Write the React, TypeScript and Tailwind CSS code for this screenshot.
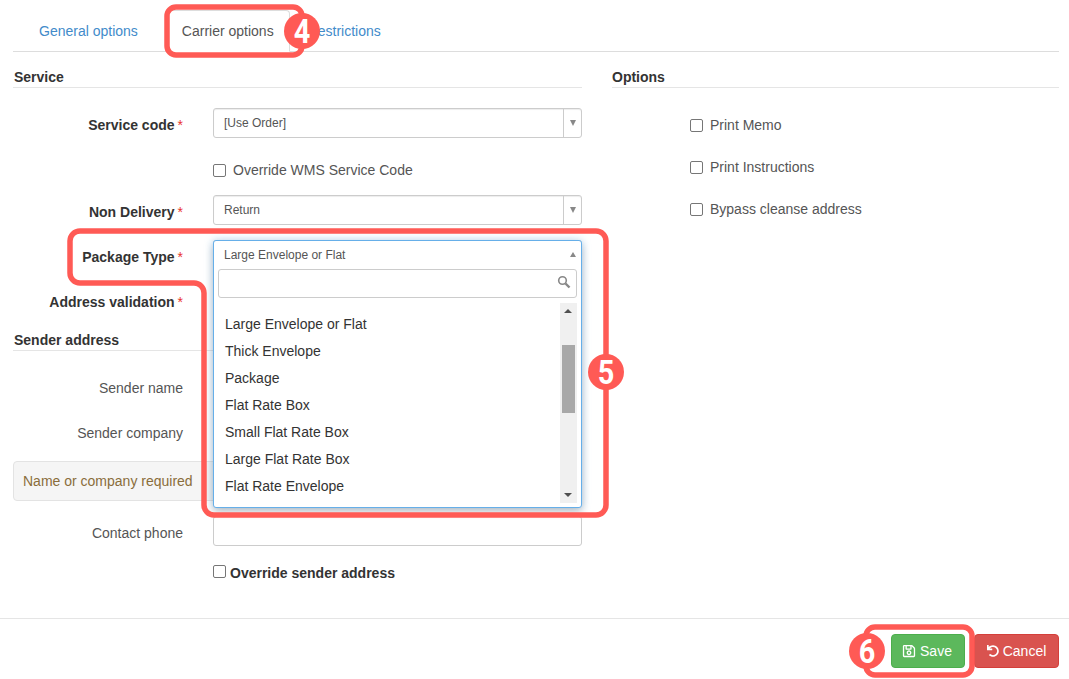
import { FaRegSave, FaUndo } from "react-icons/fa";

const packageTypes = [
  "Large Envelope or Flat",
  "Thick Envelope",
  "Package",
  "Flat Rate Box",
  "Small Flat Rate Box",
  "Large Flat Rate Box",
  "Flat Rate Envelope",
];

function Box() {
  return <span className="block w-[13px] h-[13px] shrink-0 rounded-[2px] border border-[#767676] bg-white" />;
}

function SectionTitle({ text, indent }: { text: string; indent?: boolean }) {
  return (
    <div className={`h-[21px] border-b border-[#e5e5e5] text-[14px] leading-[20px] font-bold text-[#333] ${indent ? "pl-[1px]" : ""}`}>
      {text}
    </div>
  );
}

function Label({ text, required }: { text: string; required?: boolean }) {
  return (
    <div className="w-[170px] shrink-0 pt-[4px] text-right text-[14px] leading-[20px]">
      {required ? (
        <span className="font-bold text-[#333]">
          {text}
          <span className="ml-[3px] font-normal text-[#e9322d]">*</span>
        </span>
      ) : (
        <span className="text-[#555]">{text}</span>
      )}
    </div>
  );
}

function Select({ value }: { value: string }) {
  return (
    <div className="relative w-[369px] h-[30px] rounded-[3px] border border-[#ccc] bg-white shadow-[inset_0_1px_1px_rgba(0,0,0,0.075)] pl-[10px] text-[12px] leading-[28px] text-[#555]">
      {value}
      <span className="absolute right-0 top-0 bottom-0 w-[18px] border-l border-[#ccc] flex items-center justify-center">
        <span className="block w-0 h-0 border-x-[3.5px] border-x-transparent border-t-[6px] border-t-[#888]" />
      </span>
    </div>
  );
}

function Badge({ text, className }: { text: string; className: string }) {
  return (
    <div
      className={`absolute w-[36px] h-[36px] rounded-full bg-[#ff5a55] text-white text-center ${className}`}
    >
      <span className="block scale-x-[0.85] text-[34px] leading-[36px] font-bold font-['Roboto',sans-serif]">
        {text}
      </span>
    </div>
  );
}

export default function App() {
  return (
    <div className="relative w-[1069px] h-[679px] overflow-hidden bg-white font-['Liberation_Sans',Arial,sans-serif] text-[14px] text-[#333]">
      {/* tabs */}
      <div className="ml-[13px] mr-[10px] pt-[10px] h-[52px] flex border-b border-[#ddd] pl-[11px]">
        <div className="h-[42px] px-[15px] pt-[11px] leading-[20px] text-[#428bca]">General options</div>
        <div className="ml-[15px] h-[42px] pl-[13px] pr-[15px] pt-[10px] leading-[20px] text-[#555] bg-white border border-[#ddd] border-b-white rounded-t-[4px]">
          Carrier options
        </div>
        <div className="ml-[3px] h-[42px] px-[15px] pt-[11px] leading-[20px] text-[#428bca]">Restrictions</div>
      </div>

      <div className="flex ml-[13px] mr-[10px] mt-[15px] h-[551px]">
        {/* left column */}
        <div className="w-[569px] shrink-0">
          <SectionTitle text="Service" indent />
          <div className="mt-[20px] flex items-center gap-[30px]">
            <Label text="Service code" required />
            <Select value="[Use Order]" />
          </div>
          <div className="mt-[24px] ml-[200px] flex items-center gap-[7px] h-[16px] text-[#555]">
            <Box />
            Override WMS Service Code
          </div>
          <div className="mt-[17px] flex items-center gap-[30px]">
            <Label text="Non Delivery" required />
            <Select value="Return" />
          </div>
          <div className="mt-[15px] flex items-center gap-[30px]">
            <Label text="Package Type" required />
            <Select value="Large Envelope or Flat" />
          </div>
          <div className="mt-[15px] h-[30px] flex items-center gap-[30px]">
            <Label text="Address validation" required />
          </div>
          <div className="mt-[15px]">
            <SectionTitle text="Sender address" indent />
          </div>
          <div className="mt-[20px] flex items-center gap-[30px] h-[30px]">
            <Label text="Sender name" />
          </div>
          <div className="mt-[15px] flex items-center gap-[30px] h-[30px]">
            <Label text="Sender company" />
          </div>
          <div className="mt-[15px] h-[40px] rounded-[4px] border border-[#e3e3e3] bg-[#f5f5f5] pl-[9px] leading-[38px] text-[#8a6d3b]">
            Name or company required
          </div>
          <div className="mt-[15px] flex items-center gap-[30px]">
            <Label text="Contact phone" />
            <div className="w-[369px] h-[30px] rounded-[3px] border border-[#ccc] bg-white" />
          </div>
          <div className="mt-[19px] ml-[200px] flex items-center gap-[4px] h-[16px] font-bold text-[#333]">
            <span className="mb-[4px]">
              <Box />
            </span>
            Override sender address
          </div>
        </div>

        {/* right column */}
        <div className="ml-[30px] w-[447px]">
          <SectionTitle text="Options" />
          <div className="mt-[29px] ml-[78px] flex flex-col gap-[26px] text-[#555]">
            <div className="flex items-center gap-[7px] h-[16px]"><Box />Print Memo</div>
            <div className="flex items-center gap-[7px] h-[16px]"><Box />Print Instructions</div>
            <div className="flex items-center gap-[7px] h-[16px]"><Box />Bypass cleanse address</div>
          </div>
        </div>
      </div>

      {/* footer */}
      <div className="border-t border-[#e5e5e5] h-[61px] flex justify-end items-start gap-[9px] pr-[10px] pt-[15px]">
        <button className="h-[34px] w-[74px] pr-[2px] rounded-[4px] border border-[#4cae4c] bg-[#5cb85c] text-white flex items-center justify-center gap-[4px]">
          <FaRegSave className="w-[14px] h-[14px]" />
          Save
        </button>
        <button className="h-[34px] w-[85px] rounded-[4px] border border-[#d43f3a] bg-[#d9534f] text-white flex items-center justify-center gap-[4px]">
          <FaUndo className="w-[12px] h-[12px]" />
          Cancel
        </button>
      </div>

      {/* open dropdown */}
      <div className="absolute left-[213px] top-[240px] w-[369px] h-[268px] rounded-[3px] border border-[#66afe9] bg-white shadow-[0_4px_8px_rgba(0,0,0,0.2),0_0_8px_rgba(102,175,233,0.4)]">
        <div className="pl-[10px] h-[28px] text-[12px] leading-[29px] text-[#555]">Large Envelope or Flat</div>
        <span className="absolute right-[5px] top-[11px] block w-0 h-0 border-x-[3.5px] border-x-transparent border-b-[5px] border-b-[#888]" />
        <div className="relative mx-[4px] h-[29px] rounded-[3px] border border-[#ccc] bg-white">
          <svg className="absolute right-[5px] top-[5px]" width="14" height="14" viewBox="0 0 14 14" fill="none" stroke="#888">
            <circle cx="5.5" cy="5.5" r="3.8" strokeWidth="1.6" />
            <path d="M8.5 8.5 L12.5 12.5" strokeWidth="2.4" />
          </svg>
        </div>
        <div className="relative mx-[4px] mt-[5px] h-[200px]">
          <ul className="pt-[8px] pl-[7px] leading-[27px] text-[#333]">
            {packageTypes.map((name) => (
              <li key={name}>{name}</li>
            ))}
          </ul>
          <div className="absolute right-0 top-0 bottom-0 w-[17px] bg-[#f0f0f0]">
            <span className="absolute left-[4px] top-[6px] block w-0 h-0 border-x-[4px] border-x-transparent border-b-[4px] border-b-[#505050]" />
            <span className="absolute left-[2px] top-[42px] block w-[13px] h-[68px] bg-[#a8a8a8]" />
            <span className="absolute left-[4px] bottom-[6px] block w-0 h-0 border-x-[4px] border-x-transparent border-t-[4px] border-t-[#505050]" />
          </div>
        </div>
      </div>

      {/* callouts drawn over the screenshot */}
      <svg className="absolute inset-0 pointer-events-none" width="1069" height="679" fill="none" stroke="#ff5a55" strokeWidth="5.5">
        <rect x="167" y="7" width="135" height="48" rx="9" />
        <path d="M80 231 H596 a10 10 0 0 1 10 10 V505 a10 10 0 0 1 -10 10 H214 a10 10 0 0 1 -10 -10 V293 a10 10 0 0 0 -10 -10 H80 a10 10 0 0 1 -10 -10 V241 a10 10 0 0 1 10 -10 Z" />
        <rect x="866" y="627" width="106" height="48" rx="9" />
      </svg>
      <Badge text="4" className="left-[284px] top-[13px]" />
      <Badge text="5" className="left-[588px] top-[354px]" />
      <Badge text="6" className="left-[849px] top-[633px]" />
    </div>
  );
}
